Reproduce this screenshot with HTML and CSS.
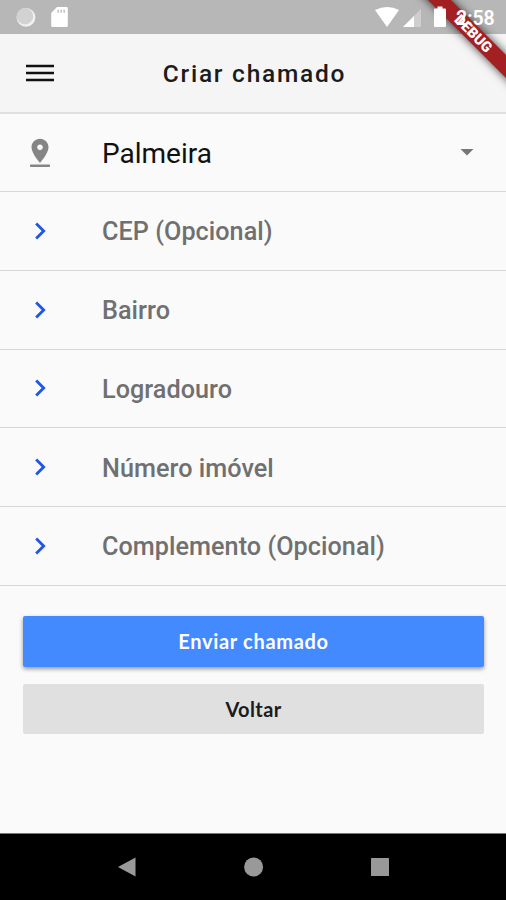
FILE: index.html
```html
<!DOCTYPE html>
<html lang="pt-BR">
<head>
<meta charset="utf-8">
<title>Criar chamado</title>
<link rel="stylesheet" href="styles.css">
</head>
<body>
<div class="screen">
  <div class="status">
    <svg class="status-left" width="60" height="34" viewBox="0 0 60 34">
      <circle cx="16" cy="17.3" r="9.4" fill="#f0f0f0"/><circle cx="15" cy="16.3" r="8.2" fill="#d2d2d2"/>
      <path d="M47 7h9.500a1.300 1.300 0 0 1 1.300 1.300v17.400a1.300 1.300 0 0 1-1.300 1.300h-14a1.300 1.300 0 0 1-1.300-1.300V13z" fill="#fff"/>
      <path d="M48.200 9.800v3M51.200 9.800v3M54.200 9.800v3" stroke="#c4c4c4" stroke-width="1.600"/>
    </svg>
    <svg class="status-right" width="76" height="34" viewBox="0 0 76 34">
      <path d="M0 10Q12.500 4 24 10L12 27z" fill="#fff"/>
      <path d="M46 9v18H28z" fill="#cfcfcf"/><path d="M39 16v11H28z" fill="#fff"/>
      <path d="M60 8.500h2.500V6.500h5v2h2.500q1 0 1 1V26q0 1-1 1H60q-1 0-1-1V9.500q0-1 1-1z" fill="#fff"/>
    </svg>
    <span class="time">2:58</span>
  </div>
  <header class="bar">
    <svg class="menu" width="28" height="20" viewBox="0 0 28 20"><path d="M0 3h28M0 10h28M0 17h28" stroke="#111" stroke-width="2.600"/></svg>
    <h1>Criar chamado</h1>
  </header>
  <main>
    <div class="row city">
      <svg class="icon" width="34" height="34" viewBox="0 0 24 24"><path d="M18 8c0-3.310-2.690-6-6-6S6 4.690 6 8c0 4.500 6 11 6 11s6-6.500 6-11zm-8 0c0-1.100.900-2 2-2s2 .9 2 2-.890 2-2 2c-1.100 0-2-.900-2-2zM5 20.200v1.600h14v-1.600H5z"/></svg>
      <span>Palmeira</span>
      <svg class="caret" width="14" height="7" viewBox="0 0 14 7"><path d="M.5 0h13L7 6.500z" fill="#777"/></svg>
    </div>
    <div class="row"><svg class="icon" width="34" height="34" viewBox="0 0 24 24"><path d="M8.590 16.590 13.170 12 8.590 7.410 10 6l6 6-6 6z"/></svg><span>CEP (Opcional)</span></div>
    <div class="row"><svg class="icon" width="34" height="34" viewBox="0 0 24 24"><path d="M8.590 16.590 13.170 12 8.590 7.410 10 6l6 6-6 6z"/></svg><span>Bairro</span></div>
    <div class="row"><svg class="icon" width="34" height="34" viewBox="0 0 24 24"><path d="M8.590 16.590 13.170 12 8.590 7.410 10 6l6 6-6 6z"/></svg><span>Logradouro</span></div>
    <div class="row"><svg class="icon" width="34" height="34" viewBox="0 0 24 24"><path d="M8.590 16.590 13.170 12 8.590 7.410 10 6l6 6-6 6z"/></svg><span>Número imóvel</span></div>
    <div class="row"><svg class="icon" width="34" height="34" viewBox="0 0 24 24"><path d="M8.590 16.590 13.170 12 8.590 7.410 10 6l6 6-6 6z"/></svg><span>Complemento (Opcional)</span></div>
    <div class="actions">
      <button class="primary"><span>Enviar chamado</span></button>
      <button class="secondary"><span>Voltar</span></button>
    </div>
  </main>
  <nav class="nav">
    <svg width="18" height="20" viewBox="0 0 18 20"><path d="M0 10 17.500.500v19z" fill="#999"/></svg>
    <svg width="20" height="20" viewBox="0 0 20 20"><circle cx="9.600" cy="10" r="9.500" fill="#999"/></svg>
    <svg width="18" height="18" viewBox="0 0 18 18"><rect width="18" height="18" rx=".5" fill="#999"/></svg>
  </nav>
  <svg class="ribbon" width="106" height="106" viewBox="0 0 106 106">
    <path class="ribbon-band" d="M18-10 116 88V65L41-10z"/>
    <text class="ribbon-text" transform="translate(73.500 33.500) rotate(45)" text-anchor="middle" y="5">DEBUG</text>
  </svg>
</div>
</body>
</html>
```
FILE: styles.css
```css
* { box-sizing: border-box; }
body { margin: 0; font-family: Roboto, "Liberation Sans", sans-serif; }
.screen {
  position: relative;
  width: 506px;
  height: 900px;
  overflow: hidden;
  display: flex;
  flex-direction: column;
  background: #fafafa;
}
.status {
  height: 34px;
  background: #b7b7b7;
  display: flex;
  align-items: center;
  padding: 0 11px 0 10px;
}
.status-right { position: relative; z-index: 2; margin-left: auto; }
.time {
  position: relative;
  z-index: 2;
  margin-left: 5px;
  width: 39px;
  color: #fff;
  font-size: 19.500px;
  font-weight: 600;
  line-height: 34px;
  white-space: nowrap;
  padding-top: 3px;
}
.bar {
  height: 80px;
  background: #f5f5f5;
  border-bottom: 2px solid #e0e0e0;
  display: grid;
  grid-template-columns: 80px 1fr 80px;
  align-items: center;
}
.menu { margin-left: 26px; }
h1 {
  margin: 0 0 0 3px;
  text-align: center;
  font-size: 24.500px;
  font-weight: 500;
  letter-spacing: 1.750px;
  color: #1b1b1b;
  white-space: nowrap;
}
main { flex: 1; }
.row {
  height: 78.750px;
  display: flex;
  align-items: center;
  border-bottom: 1.500px solid #d6d6d6;
  font-size: 25.200px;
  font-weight: 500;
  letter-spacing: .050px;
  color: #707070;
  padding-left: 23px;
}
.row span { margin-left: 45px; padding-top: 2px; white-space: nowrap; }
.icon { fill: #1e57e8; }
.city .icon { fill: #858585; }
.city { height: 78px; color: #111; font-size: 28px; font-weight: 400; letter-spacing: 0; }
.caret { margin-left: auto; margin-right: 32px; }
.actions {
  display: flex;
  flex-direction: column;
  gap: 17px;
  padding: 30px 22px 0 23px;
}
button {
  height: 50px;
  border: 0;
  padding: 0;
  border-radius: 2px;
  font-family: Lato, "Open Sans", sans-serif;
  font-size: 20px;
  font-weight: 700;
  letter-spacing: .700px;
}
.primary {
  height: 51px;
  background: #448aff;
  color: #fff;
  box-shadow: 0 2px 4px rgba(0, 0, 0, .4);
}
.secondary { background: #e0e0e0; color: #1b1b1b; letter-spacing: .400px; }
.nav {
  height: 67px;
  background: #000;
  border-top: 1px solid #777;
  display: flex;
  justify-content: space-between;
  align-items: center;
  padding: 0 117px 0 118px;
}
.ribbon { position: absolute; top: 0; right: 0; z-index: 1; }
.ribbon-band { fill: #a31f22; filter: drop-shadow(0 0 5px rgba(0, 0, 0, .75)); }
.ribbon-text { fill: #fff; font-size: 14.500px; font-weight: 900; }
```
